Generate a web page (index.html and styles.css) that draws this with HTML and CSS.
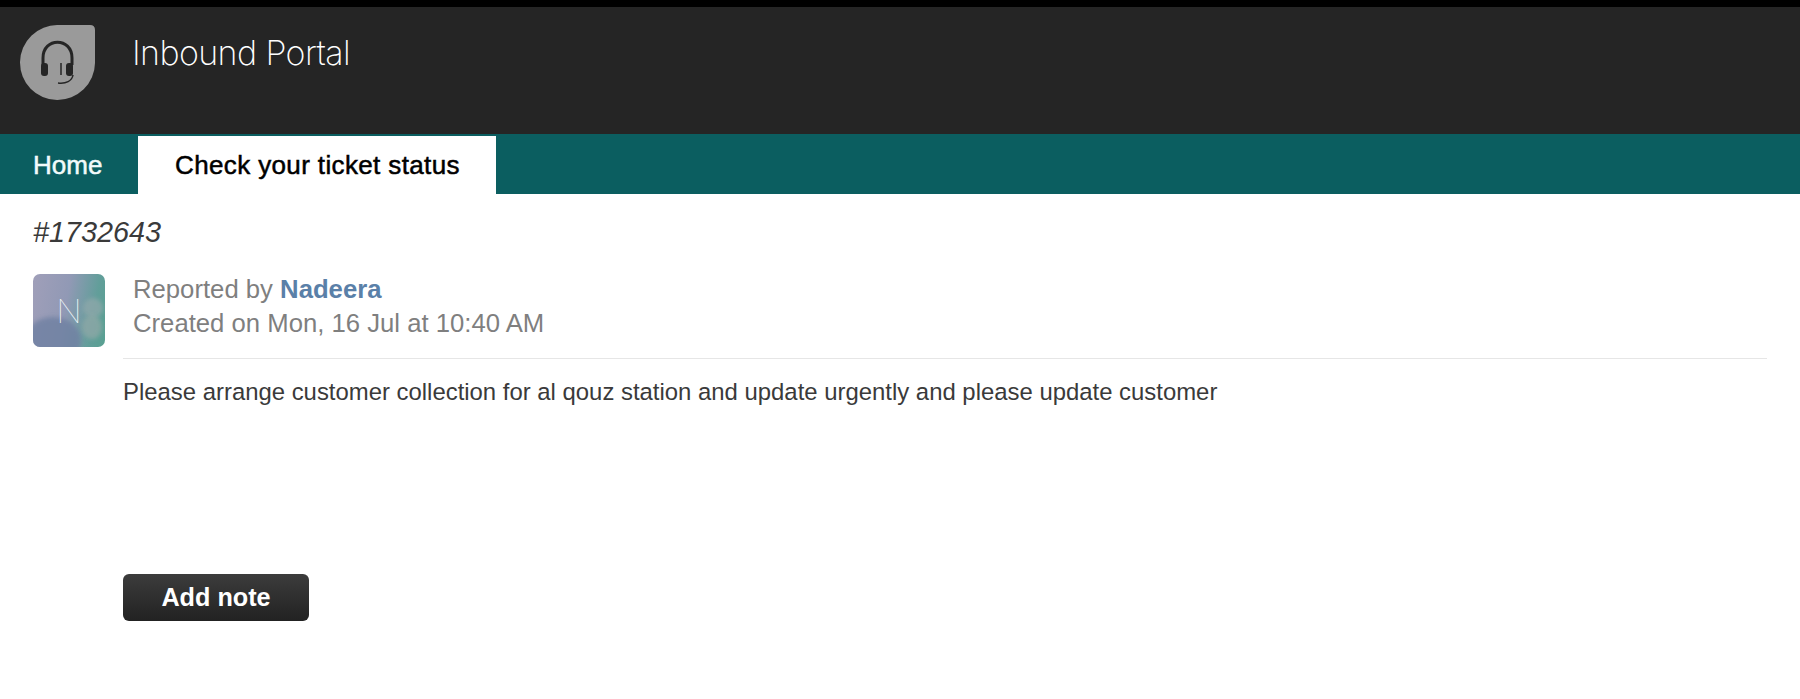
FILE: index.html
```html
<!DOCTYPE html>
<html lang="en">
<head>
<meta charset="utf-8">
<title>Inbound Portal</title>
<link rel="stylesheet" href="styles.css">
</head>
<body>
<header class="header">
  <svg class="logo" viewBox="0 0 76 76" width="76" height="76" aria-hidden="true">
    <path class="logo-shape" d="M38 0H70Q75 0 75 5V38A37.500 37.500 0 1 1 38 0Z"/>
    <path class="logo-band" d="M23 40V33C23 12 52 12 52 33V40"/>
    <rect class="logo-cup" x="21" y="38" width="7" height="13" rx="3"/>
    <rect class="logo-cup" x="46" y="38" width="7" height="13" rx="3"/>
    <path class="logo-mic" d="M41 38V50M53 50C52 56 46 59 38 58"/>
  </svg>
  <h1 class="brand">Inbound Portal</h1>
</header>
<nav class="nav">
  <a class="nav-item">Home</a>
  <a class="nav-item nav-active">Check your ticket status</a>
</nav>
<main class="main">
  <h2 class="ticket-id">#1732643</h2>
  <div class="meta">
    <div class="avatar">
      <span class="blob blob-a"></span>
      <span class="blob blob-b"></span>
      <span class="blob blob-c"></span>
      <span class="avatar-letter">N</span>
    </div>
    <div class="meta-text">
      <div>Reported by <a class="author">Nadeera</a></div>
      <div>Created on Mon, 16 Jul at 10:40 AM</div>
    </div>
  </div>
  <div class="content">
    <p class="message">Please arrange customer collection for al qouz station and update urgently and please update customer</p>
    <button class="add-note" type="button">Add note</button>
  </div>
</main>
</body>
</html>
```
FILE: styles.css
```css
* { box-sizing: border-box; }
html, body { margin: 0; height: 100%; }
body {
  background: #fff;
  font-family: "Liberation Sans", Arial, sans-serif;
  color: #333;
  overflow: hidden;
}
.header {
  height: 134px;
  background: #252525;
  border-top: 7px solid #000;
  padding: 18px 0 0 20px;
  display: flex;
  align-items: flex-start;
  gap: 36px;
}
.logo { display: block; flex: none; }
.logo-shape { fill: #9a9a9a; }
.logo-band { fill: none; stroke: #252525; stroke-width: 3; }
.logo-cup { fill: #252525; }
.logo-mic { fill: none; stroke: #252525; stroke-width: 1.500; }
.brand {
  margin: 6px 0 0;
  font-family: Inter, "Liberation Sans", sans-serif;
  font-weight: 200;
  font-size: 34px;
  line-height: 44px;
  color: #fff;
  letter-spacing: -0.6px;
}
.nav {
  height: 60px;
  background: #0b5e60;
  display: flex;
  align-items: flex-end;
}
.nav-item {
  width: 138px;
  height: 58px;
  padding-left: 33px;
  font-size: 26px;
  line-height: 58px;
  color: #f2fbfb;
  -webkit-text-stroke: 0.5px currentColor;
}
.nav-active {
  width: 358px;
  background: #fff;
  color: #000;
  padding-left: 37px;
  letter-spacing: 0.37px;
}
.main { padding: 20px 33px 0; }
.ticket-id {
  margin: 0;
  font-size: 28.800px;
  line-height: 36px;
  font-weight: 400;
  font-style: italic;
  color: #3a3a3a;
}
.meta {
  margin-top: 24px;
  display: flex;
  gap: 28px;
}
.avatar {
  position: relative;
  flex: none;
  width: 72px;
  height: 73px;
  border-radius: 7px;
  overflow: hidden;
  background: linear-gradient(100deg, #a09fb9 0%, #9199b5 45%, #629e9a 80%, #58a091 100%);
  display: flex;
  align-items: center;
  justify-content: center;
}
.blob { position: absolute; border-radius: 50%; filter: blur(2px); }
.blob-a { left: -8px; bottom: -16px; width: 56px; height: 46px; background: #6f80a2; opacity: .8; }
.blob-b { right: 2px; top: 24px; width: 20px; height: 20px; background: #93a9ac; opacity: .7; }
.blob-c { right: 3px; bottom: 8px; width: 20px; height: 24px; background: #93a9a8; opacity: .7; }
.avatar-letter {
  position: relative;
  font-family: Inter, "Liberation Sans", sans-serif;
  font-weight: 100;
  font-size: 33px;
  color: #f4fafc;
}
.meta-text {
  margin-top: -2px;
  font-size: 25.700px;
  line-height: 34px;
  color: #7f7f7f;
}
.author { font-weight: 700; color: #5a80a8; }
.content {
  margin-left: 90px;
  margin-top: 11px;
  border-top: 1px solid #e6e6e6;
  padding-top: 17px;
}
.message {
  margin: 0;
  font-size: 23.900px;
  line-height: 32px;
  color: #3a3a3a;
}
.add-note {
  display: block;
  margin-top: 166px;
  width: 186px;
  height: 47px;
  border: 0;
  border-radius: 6px;
  background: linear-gradient(#3c3c3c, #222);
  color: #fff;
  font-family: "Liberation Sans", Arial, sans-serif;
  font-weight: 700;
  font-size: 25.200px;
  padding: 0;
}
```
